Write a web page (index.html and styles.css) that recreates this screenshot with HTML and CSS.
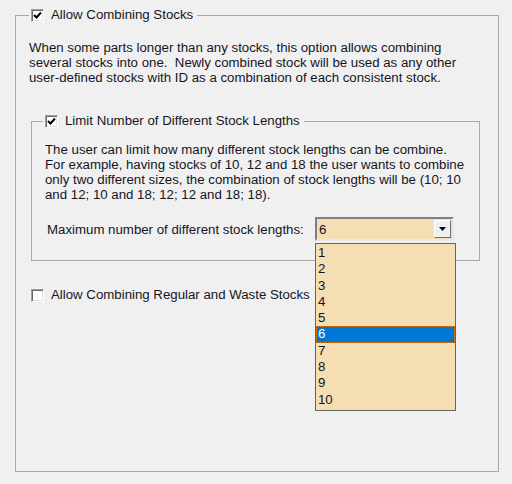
FILE: index.html
```html
<!DOCTYPE html>
<html lang="en">
<head>
    <meta charset="UTF-8">
    <title>Combining Stocks</title>
    <link rel="stylesheet" href="styles.css">
</head>
<body>
    <fieldset class="group outer">
        <legend>
            <span class="check checked">
                <svg width="9" height="9" viewBox="0 0 9 9"><polyline points="1,4 3.5,6.5 8,1.5" fill="none" stroke="#000" stroke-width="2"/></svg>
            </span>
            <span class="caption">Allow Combining Stocks</span>
        </legend>

        <p class="info">When some parts longer than any stocks, this option allows combining several stocks into one.&nbsp; Newly combined stock will be used as any other user-defined stocks with ID as a combination of each consistent stock.</p>

        <fieldset class="group inner">
            <legend>
                <span class="check checked">
                    <svg width="9" height="9" viewBox="0 0 9 9"><polyline points="1,4 3.5,6.5 8,1.5" fill="none" stroke="#000" stroke-width="2"/></svg>
                </span>
                <span class="caption">Limit Number of Different Stock Lengths</span>
            </legend>

            <p class="info">The user can limit how many different stock lengths can be combine. For example, having stocks of 10, 12 and 18 the user wants to combine only two different sizes, the combination of stock lengths will be (10; 10 and 12; 10 and 18; 12; 12 and 18; 18).</p>

            <div class="field">
                <label>Maximum number of different stock lengths:</label>
                <div class="combo">
                    <span class="combo-value">6</span>
                    <span class="combo-btn">
                        <svg width="7" height="4" viewBox="0 0 7 4"><polygon points="0,0 7,0 3.5,4" fill="#000"/></svg>
                    </span>
                    <ul class="combo-list">
                        <li>1</li>
                        <li>2</li>
                        <li>3</li>
                        <li>4</li>
                        <li>5</li>
                        <li class="selected">6</li>
                        <li>7</li>
                        <li>8</li>
                        <li>9</li>
                        <li>10</li>
                    </ul>
                </div>
            </div>
        </fieldset>

        <div class="option">
            <span class="check"></span>
            <span class="caption">Allow Combining Regular and Waste Stocks</span>
        </div>
    </fieldset>
</body>
</html>
```

FILE: styles.css
```css
body {
    margin: 0;
    background: #f0f0f0;
    font-family: "Liberation Sans", Arial, sans-serif;
    font-size: 13.25px;
    color: #14141e;
}

.group {
    border: 1px solid #a9a9a9;
    margin: 0;
    padding: 0;
    min-width: 0;
}

.group legend {
    display: flex;
    align-items: center;
    height: 14px;
    padding: 0 4px 0 2px;
}

.outer {
    width: 484px;
    height: 464px;
    box-sizing: border-box;
    margin: 8px 0 0 15px;
    padding: 0 13px;
}

.inner {
    width: 449px;
    box-sizing: border-box;
    margin: 29px 0 0 2px;
    padding: 0 13px 0 13px;
    height: 147px;
}

.inner legend {
    margin-left: -2px;
}

.check {
    display: inline-flex;
    align-items: center;
    justify-content: center;
    width: 13px;
    height: 13px;
    box-sizing: border-box;
    background: #fff;
    border: 1px solid;
    border-color: #a0a0a0 #fff #fff #a0a0a0;
    box-shadow: inset 1px 1px 0 #696969, inset -1px -1px 0 #e3e3e3;
}

.caption {
    margin-left: 7px;
    line-height: 14px;
}

.info {
    margin: 18px 0 0 0;
    line-height: 15px;
    width: 440px;
}

.inner .info {
    margin-top: 14px;
    width: 420px;
}

.field {
    display: flex;
    align-items: center;
    margin-top: 15px;
    margin-left: 2px;
}

.field label {
    width: 268px;
}

.combo {
    position: relative;
    display: flex;
    align-items: center;
    width: 139px;
    height: 24px;
    box-sizing: border-box;
    background: #f5deb3;
    border: 2px solid;
    border-color: #808080 #e8e8e8 #e8e8e8 #808080;
}

.combo-value {
    flex: 1;
    padding-left: 2px;
}

.combo-btn {
    display: flex;
    align-items: center;
    justify-content: center;
    width: 17px;
    height: 18px;
    margin-right: 1px;
    box-sizing: border-box;
    background: #f0f0f0;
    border: 1px solid;
    border-color: #fff #6e6e6e #6e6e6e #fff;
}

.combo-list {
    position: absolute;
    top: 24px;
    left: -2px;
    width: 141px;
    margin: 0;
    padding: 1px 0 2px 0;
    list-style: none;
    background: #f5deb3;
    border: 1px solid #646464;
    box-sizing: border-box;
    z-index: 2;
}

.combo-list li {
    height: 16.3px;
    line-height: 16px;
    padding-left: 2px;
    box-sizing: border-box;
}

.combo-list li.selected {
    background: #0078d7;
    color: #fff;
    outline: 1px dotted #e08020;
    outline-offset: -1px;
}

.option {
    display: flex;
    align-items: center;
    margin-top: 27px;
    margin-left: 2px;
}
```
